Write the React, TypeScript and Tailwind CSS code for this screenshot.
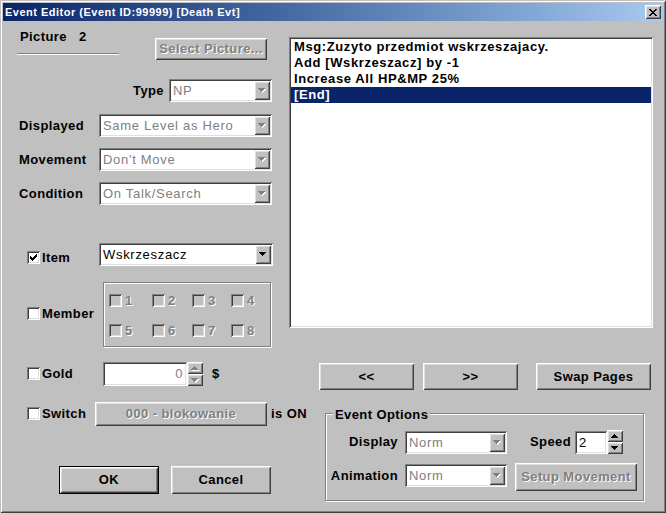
import type { ReactNode } from "react";

// classic 3D bevels
const RAISED =
  "shadow-[inset_1px_1px_0_#ffffff,inset_-1px_-1px_0_#404040,inset_2px_2px_0_#dfdfdf,inset_-2px_-2px_0_#808080]";
const SUNKEN =
  "shadow-[inset_1px_1px_0_#808080,inset_-1px_-1px_0_#ffffff,inset_2px_2px_0_#404040,inset_-2px_-2px_0_#dfdfdf]";
const ETCHED = "border border-[#808080] shadow-[inset_1px_1px_0_#ffffff,1px_1px_0_#ffffff]";
const GREYED = "text-[#808080] [text-shadow:1px_1px_0_#ffffff]";

type Props = { children?: ReactNode; className?: string };

function Tri({ up, grey }: { up?: boolean; grey?: boolean }) {
  const d = up
    ? "M3 0h1v1H3zM2 1h3v1H2zM1 2h5v1H1zM0 3h7v1H0z"
    : "M0 0h7v1H0zM1 1h5v1H1zM2 2h3v1H2zM3 3h1v1H3z";
  return (
    <svg width="8" height="5" viewBox="0 0 8 5" shapeRendering="crispEdges">
      {grey && <path d={d} fill="#ffffff" transform="translate(1 1)" />}
      <path d={d} fill={grey ? "#808080" : "#000000"} />
    </svg>
  );
}

function Check({ checked, disabled }: { checked?: boolean; disabled?: boolean }) {
  return (
    <div
      className={`flex h-[13px] w-[13px] shrink-0 items-center justify-center ${SUNKEN} ${
        disabled ? "bg-[#c0c0c0]" : "bg-white"
      }`}
    >
      {checked && (
        <svg width="7" height="7" viewBox="0 0 7 7" shapeRendering="crispEdges">
          <path
            d="M6 0h1v1H6zM5 1h2v1H5zM0 2h1v1H0zM4 2h3v1H4zM0 3h2v1H0zM3 3h3v1H3zM0 4h5v1H0zM1 5h3v1H1zM2 6h1v1H2z"
            fill="#000"
          />
        </svg>
      )}
    </div>
  );
}

function Btn({ className, children, disabled, def }: Props & { disabled?: boolean; def?: boolean }) {
  const face = (
    <div
      className={`flex shrink-0 items-center justify-center whitespace-nowrap bg-[#c0c0c0] ${RAISED} ${
        def ? "h-full w-full" : className
      } ${disabled ? GREYED : "text-black"}`}
    >
      {children}
    </div>
  );
  if (!def) return face;
  return <div className={`shrink-0 border border-black ${className}`}>{face}</div>;
}

function Combo({ className, text, disabled }: { className: string; text: string; disabled?: boolean }) {
  return (
    <div className={`flex h-[23px] shrink-0 bg-white p-[2px] ${SUNKEN} ${className}`}>
      <div
        className={`flex-1 overflow-hidden whitespace-nowrap pl-[2px] pt-[1px] font-normal leading-[18px] tracking-[0.7px] ${
          disabled ? "text-[#808080]" : "text-black"
        }`}
      >
        {text}
      </div>
      <div className={`flex w-[16px] items-center justify-center bg-[#c0c0c0] ${RAISED}`}>
        <Tri grey={disabled} />
      </div>
    </div>
  );
}

function Spin({ className, grey }: { className: string; grey?: boolean }) {
  return (
    <div className={`flex w-[16px] shrink-0 flex-col ${className}`}>
      <div className={`flex flex-1 items-center justify-center bg-[#c0c0c0] ${RAISED}`}>
        <Tri up grey={grey} />
      </div>
      <div className={`flex flex-1 items-center justify-center bg-[#c0c0c0] ${RAISED}`}>
        <Tri grey={grey} />
      </div>
    </div>
  );
}

function TitleBar() {
  return (
    <div className="flex h-[18px] items-center bg-linear-to-r from-[#0a246a] to-[#a6caf0] pl-[2px] pr-[2px]">
      <span className="text-[11px] font-bold leading-[18px] tracking-[0.5px] text-white">
        Event Editor (Event ID:99999) [Death Evt]
      </span>
      <div className={`ml-auto flex h-[14px] w-[16px] items-center justify-center bg-[#c0c0c0] ${RAISED}`}>
        <svg width="8" height="7" viewBox="0 0 8 7" shapeRendering="crispEdges">
          <path
            d="M0 0h2v1H0zM6 0h2v1H6zM1 1h2v1H1zM5 1h2v1H5zM2 2h4v1H2zM3 3h2v1H3zM2 4h4v1H2zM1 5h2v1H1zM5 5h2v1H5zM0 6h2v1H0zM6 6h2v1H6z"
            fill="#000"
          />
        </svg>
      </div>
    </div>
  );
}

const ROW_LABELS = [
  { label: "Displayed", value: "Same Level as Hero", mt: "mt-[12px]" },
  { label: "Movement", value: "Don't Move", mt: "mt-[11px]" },
  { label: "Condition", value: "On Talk/Search", mt: "mt-[11px]" },
];

function LeftColumn() {
  return (
    <div className="flex w-[286px] shrink-0 flex-col whitespace-nowrap">
      <div className="flex">
        <div className="ml-[14px] w-[102px] shrink-0 pt-[7px]">
          <div className="pl-[3px] leading-[16px]">
            Picture<span className="ml-[12px]">2</span>
          </div>
          <div className="mt-[8px] h-[2px] border-t border-b border-t-[#808080] border-b-white" />
        </div>
        <Btn className="ml-[36px] mt-[16px] h-[22px] w-[112px]" disabled>
          Select Picture...
        </Btn>
      </div>

      <div className="mt-[19px] flex items-center">
        <span className="w-[161px] shrink-0 text-right">Type</span>
        <Combo className="ml-[5px] w-[103px]" text="NP" disabled />
      </div>

      {ROW_LABELS.map((r) => (
        <div key={r.label} className={`${r.mt} flex items-center pl-[16px]`}>
          <span className="w-[80px] shrink-0">{r.label}</span>
          <Combo className="w-[173px]" text={r.value} disabled />
        </div>
      ))}

      <div className="mt-[38px] flex items-start pl-[24px]">
        <div className="mt-[8px] flex h-[13px] w-[72px] shrink-0 items-center">
          <Check checked />
          <span className="ml-[2px]">Item</span>
        </div>
        <Combo className="w-[174px]" text="Wskrzeszacz" />
      </div>

      <div className="mt-[16px] flex items-start pl-[24px]">
        <div className="mt-[25px] flex h-[13px] w-[76px] shrink-0 items-center">
          <Check />
          <span className="ml-[2px]">Member</span>
        </div>
        <div
          className={`grid h-[65px] w-[168px] shrink-0 grid-cols-[43px_40px_39px_40px] content-start gap-y-[17px] pl-[5px] pt-[11px] ${ETCHED}`}
        >
          {[1, 2, 3, 4, 5, 6, 7, 8].map((n) => (
            <div key={n} className="flex h-[13px] items-center">
              <Check disabled />
              <span className={`ml-[3px] ${GREYED}`}>{n}</span>
            </div>
          ))}
        </div>
      </div>

      <div className="mt-[15px] flex items-start pl-[24px]">
        <div className="mt-[5px] flex h-[13px] w-[76px] shrink-0 items-center">
          <Check />
          <span className="ml-[2px]">Gold</span>
        </div>
        <div
          className={`h-[24px] w-[84px] shrink-0 bg-[#ffffff] pr-[4px] text-right font-normal leading-[24px] text-[#808080] ${SUNKEN}`}
        >
          0
        </div>
        <Spin className="h-[24px]" grey />
        <span className="ml-[9px] self-center">$</span>
      </div>

      <div className="mt-[16px] flex items-start pl-[24px]">
        <div className="mt-[5px] flex h-[13px] w-[68px] shrink-0 items-center">
          <Check />
          <span className="ml-[2px]">Switch</span>
        </div>
        <Btn className="h-[24px] w-[172px]" disabled>
          000 - blokowanie
        </Btn>
        <span className="ml-[4px] shrink-0 self-center">is ON</span>
      </div>

      <div className="mt-[40px] flex">
        <Btn className="ml-[56px] h-[28px] w-[100px]" def>
          OK
        </Btn>
        <Btn className="ml-[12px] h-[28px] w-[100px]">Cancel</Btn>
      </div>
    </div>
  );
}

const COMMANDS = [
  "Msg:Zuzyto przedmiot wskrzeszajacy.",
  "Add [Wskrzeszacz] by -1",
  "Increase All HP&MP 25%",
];

function RightColumn() {
  return (
    <div className="flex flex-1 flex-col">
      <div className={`mt-[15px] h-[291px] w-[364px] bg-white p-[2px] tracking-[0.6px] ${SUNKEN}`}>
        {COMMANDS.map((c) => (
          <div key={c} className="h-[16px] whitespace-nowrap pl-[3px] leading-[16px]">
            {c}
          </div>
        ))}
        <div className="h-[16px] bg-[#0a246a] pl-[3px] leading-[16px] text-white">[End]</div>
      </div>

      <div className="mt-[35px] flex">
        <Btn className="ml-[30px] h-[27px] w-[95px]">&lt;&lt;</Btn>
        <Btn className="ml-[9px] h-[27px] w-[95px]">&gt;&gt;</Btn>
        <Btn className="ml-[18px] h-[27px] w-[115px]">Swap Pages</Btn>
      </div>

      <div className={`ml-[36px] mt-[23px] h-[88px] w-[319px] ${ETCHED}`}>
        <div className="-mt-[7px] ml-[7px] w-fit bg-[#c0c0c0] px-[2px] leading-[16px]">Event Options</div>
        <div className="mt-[7px] flex items-center">
          <span className="w-[72px] text-right">Display</span>
          <Combo className="ml-[7px] w-[102px]" text="Norm" disabled />
          <span className="ml-[23px]">Speed</span>
          <div className={`ml-[4px] h-[23px] w-[32px] bg-white pl-[4px] font-normal leading-[23px] ${SUNKEN}`}>2</div>
          <Spin className="h-[24px]" />
        </div>
        <div className="mt-[9px] flex items-start">
          <span className="mt-px flex h-[23px] w-[72px] items-center justify-end">Animation</span>
          <Combo className="ml-[7px] mt-px w-[102px]" text="Norm" disabled />
          <Btn className="ml-[8px] h-[28px] w-[122px]" disabled>
            Setup Movement
          </Btn>
        </div>
      </div>
    </div>
  );
}

export default function App() {
  return (
    <div
      className="flex h-[513px] w-[666px] flex-col bg-[#c0c0c0] p-[3px] font-['Liberation_Sans',Arial,sans-serif] text-[13px] font-bold tracking-[0.4px] text-black shadow-[inset_1px_1px_0_#c0c0c0,inset_-1px_-1px_0_#404040,inset_2px_2px_0_#ffffff,inset_-2px_-2px_0_#808080]"
    >
      <TitleBar />
      <div className="flex flex-1 pt-px">
        <LeftColumn />
        <RightColumn />
      </div>
    </div>
  );
}
